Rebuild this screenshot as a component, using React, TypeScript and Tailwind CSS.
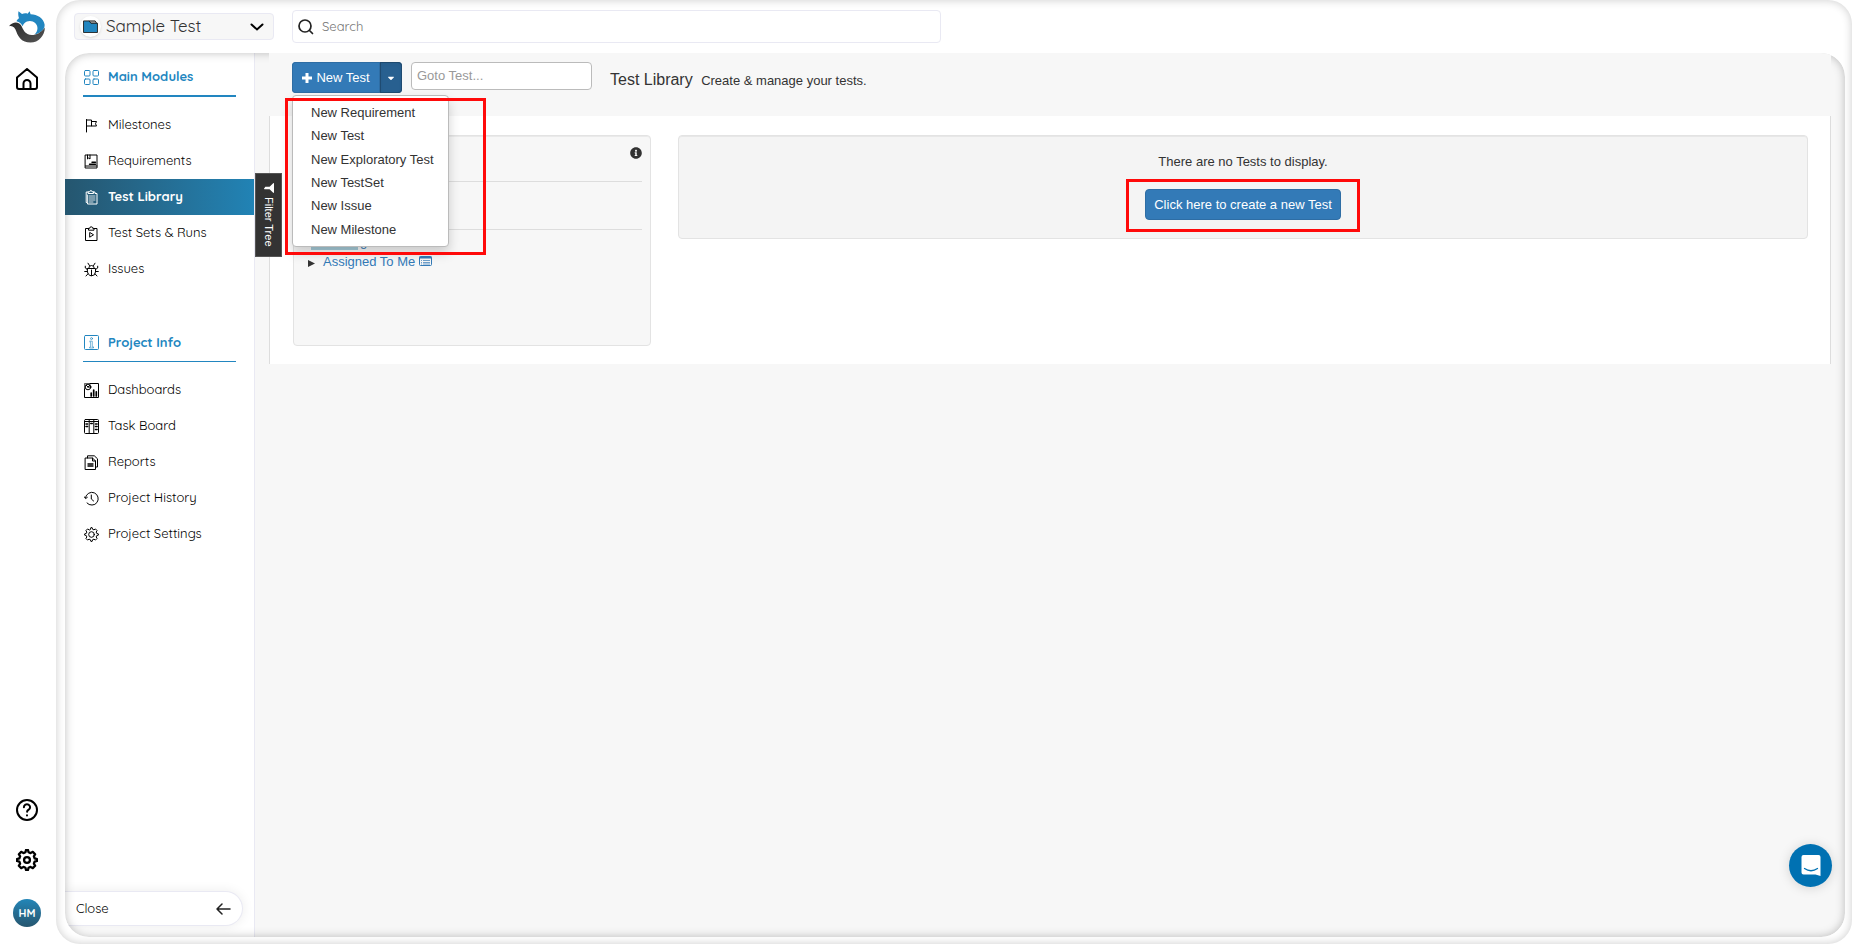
import { useState } from "react";
import { FaCaretDown, FaFilter, FaInfoCircle } from "react-icons/fa";

/* ─── Navigation ─── */
const MAIN_MODULES = [
  { label: "Milestones", icon: "flag" },
  { label: "Requirements", icon: "requirements" },
  { label: "Test Library", icon: "library" },
  { label: "Test Sets & Runs", icon: "runs" },
  { label: "Issues", icon: "bug" },
];

const PROJECT_INFO = [
  { label: "Dashboards", icon: "dashboard" },
  { label: "Task Board", icon: "board" },
  { label: "Reports", icon: "reports" },
  { label: "Project History", icon: "history" },
  { label: "Project Settings", icon: "gear" },
];

const NEW_ITEMS = [
  "New Requirement",
  "New Test",
  "New Exploratory Test",
  "New TestSet",
  "New Issue",
  "New Milestone",
];

const GEAR_PATH =
  "M10.3 3.6 11 1h2l.7 2.6 2.2.9 2.4-1.4 2.6 2.6-1.4 2.4.9 2.2L23 11v2l-2.6.7-.9 2.2 1.4 2.4-2.6 2.6-2.4-1.4-2.2.9L13 23h-2l-.7-2.6-2.2-.9-2.4 1.4-2.6-2.6 1.4-2.4-.9-2.2L1 13v-2l2.6-.7.9-2.2-1.4-2.4 2.6-2.6 2.4 1.4z";

function NavIcon({ name }: { name: string }) {
  return (
    <svg viewBox="0 0 15 15" className="size-[15px] shrink-0" fill="none" stroke="currentColor" strokeWidth="1" strokeLinecap="round" strokeLinejoin="round">
      {name === "modules" && (
        <>
          <rect x=".5" y=".5" width="5.5" height="5.5" rx="1" />
          <rect x="9" y=".5" width="5.5" height="5.5" rx="1" />
          <rect x=".5" y="9" width="5.5" height="5.5" rx="1" />
          <rect x="9" y="9" width="5.5" height="5.5" rx="1" />
        </>
      )}
      {name === "info" && (
        <>
          <rect x=".5" y=".5" width="14" height="14" rx="1" />
          <circle cx="7.5" cy="3.6" r="1" strokeWidth=".7" />
          <path d="M6 6.2h2.3v6H9.5M6 6.2v1.2h.6v4.8H5.500v.8h4v-.8" strokeWidth=".6" />
        </>
      )}
      {name === "flag" && (
        <path d="M2.500 14V1.500M2.500 2h5v6h-5M7.500 3.500h5l-1 2.200 1 2.300h-5" />
      )}
      {name === "requirements" && (
        <>
          <rect x="1.5" y="1" width="11.5" height="13" />
          <path d="M3.500 1v4l1.200-1L6 5V1M1.500 12h11.500" />
          <path d="M8 8.300h3.500M5.500 10.200h6" strokeWidth="1.4" />
        </>
      )}
      {name === "library" && (
        <>
          <path d="M4 2H2.200v10.500h1.300V14h9.500V3.500H11V2H9.500" />
          <path d="M4.500 1.800h1.200a1.200 1.200 0 0 1 2.400 0h1.400v1.700h-5z" />
          <path d="M5 6h6M5 8h6M5 10h6M5 12h4M3.500 5v7" strokeWidth=".8" />
        </>
      )}
      {name === "runs" && (
        <>
          <path d="M4.500 2.500h-3v12h11.500v-12h-3" />
          <path d="M4.500 3.800v-1.500h1.200a1.500 1.500 0 0 1 3 0H10v1.500zM5.700 6.800v4.400l3.500-2.200z" />
        </>
      )}
      {name === "bug" && (
        <>
          <path d="M3.500 6.500h8v3.300a4 4 0 0 1-8 0zM4.700 6.300a2.800 2.800 0 0 1 5.600 0M7.500 8v5.500M5.500 3.600 4 1.200M9.500 3.600 11 1.200" />
          <path d="M3.500 7.500 1.300 6V4.200M11.500 7.500 13.700 6V4.200M3.500 9.500H.7M11.500 9.500h2.800M4 11.800 2 14M11 11.800 13 14" />
        </>
      )}
      {name === "dashboard" && (
        <>
          <path d="M.5 6v8.500h14V.5H6" />
          <path d="M.5 6V.5H6" strokeWidth=".6" />
          <circle cx="4" cy="4" r="2.8" />
          <path d="M4 4 2 2M4 4h3M4 4l2-2" />
          <path d="M7.200 13V10M9.700 13V7M12.300 13V8.800" strokeWidth="1.7" />
        </>
      )}
      {name === "board" && (
        <>
          <rect x=".5" y=".5" width="14" height="14" rx="1" />
          <path d="M.5 2.500h14M5.200.5v14M9.800.5v14" />
          <path d="M2 5h1.600M2 7.500h1.600M6.800 4.500h1.400M11.500 5h1.600M11.500 7.500h1.600M11.500 10.500h1.600" strokeWidth="1.6" />
        </>
      )}
      {name === "reports" && (
        <>
          <path d="M1.500 3h7l3 3v8.500h-10z" />
          <path d="M3.500 3V.8h6.800l3.200 3V12h-2M8.500 3v3h3" />
          <path d="M4 9h5M4 11h5" strokeWidth="1.4" />
        </>
      )}
      {name === "history" && (
        <>
          <path d="M1.500 6.500A6.400 6.400 0 1 1 3 12" />
          <path d="M.3 5.800 1.500 7.600 3.300 6.400M7.300 4v4l2.300 2" />
        </>
      )}
      {name === "gear" && (
        <g transform="scale(.625)" strokeWidth="1.6">
          <path d={GEAR_PATH} />
          <circle cx="12" cy="12" r="4.5" />
        </g>
      )}
    </svg>
  );
}

function Logo() {
  return (
    <svg viewBox="0 0 36 32" className="h-8 w-9" aria-hidden="true">
      <defs>
        <linearGradient id="tail" x1="0" y1="0" x2="1" y2="1">
          <stop offset="0" stopColor="#2b2b2b" />
          <stop offset="1" stopColor="#555" />
        </linearGradient>
      </defs>
      <path
        fill="#2286c0"
        d="M9.500.2 13 2.900C15 2.200 17 2.200 18.600 2.700L20.600.3 21.600 3.300C28.500 3.300 34.500 7.500 35.600 13.500C36 17.500 33 21.500 25.500 23.600C29.200 20 29.400 15.200 26.400 12.200C23.300 9.200 18.300 9.300 15.400 12.200C14.600 13 14 14 13.700 15.200C12.300 12.500 10.500 11.300 7.500 10.300C8 9 9 8 10 7.300C9.200 5 9 2.500 9.500.2z"
      />
      <path
        fill="url(#tail)"
        d="M0 15.300C3.500 10.800 9.300 10.300 12 14.300C13.800 17 14.500 21 18.500 23C23.500 25.500 31 23.200 35.900 16.400C35.800 24.500 29.600 31.500 21.500 31.500C12.500 31.500 9.200 25.800 7.400 20.800C5.900 16.500 3.800 14.300 0 15.300z"
      />
    </svg>
  );
}

function NavSection({ title, icon, items, active, onSelect, thick }: {
  title: string;
  icon: string;
  items: { label: string; icon: string }[];
  active: string;
  onSelect: (label: string) => void;
  thick?: boolean;
}) {
  return (
    <section>
      <h2
        className={`mx-[18px] flex h-11 items-center gap-[9px] border-[#2286c0] pt-1.5 pl-px text-[13px] font-bold text-[#2286c0] ${
          thick ? "border-b-2" : "border-b"
        }`}
      >
        <NavIcon name={icon} />
        {title}
      </h2>
      <ul className="mt-2.5">
        {items.map((item) => (
          <li key={item.label}>
            <a
              href="#"
              onClick={() => onSelect(item.label)}
              className={`relative flex h-9 items-center gap-[9px] pl-[19px] text-[13px] ${
                active === item.label
                  ? "z-20 bg-linear-to-r from-[#25566f] to-[#2183b5] font-bold text-white"
                  : "text-black"
              }`}
            >
              <NavIcon name={item.icon} />
              {item.label}
            </a>
          </li>
        ))}
      </ul>
    </section>
  );
}

export default function App() {
  const [active, setActive] = useState("Test Library");
  const [menuOpen, setMenuOpen] = useState(true);

  return (
    <div className="flex h-screen bg-white font-['Quicksand','Lato',sans-serif] text-[#333]">
      {/* ── Icon rail ── */}
      <nav className="flex w-14 shrink-0 flex-col items-center pt-[11px] pr-[2px] pb-[17px]">
        <a href="#" aria-label="Home page">
          <Logo />
        </a>
        <a href="#" aria-label="Home" className="mt-[25px] text-black">
          <svg viewBox="0 0 22 22" className="size-[22px]" fill="none" stroke="currentColor" strokeWidth="2" strokeLinejoin="round">
            <path d="M1 9.500 11 1l10 8.500V19a2 2 0 0 1-2 2H3a2 2 0 0 1-2-2zM7.500 21v-5.500a3.500 3.500 0 0 1 7 0V21" />
          </svg>
        </a>
        <div className="mt-auto flex flex-col items-center gap-7 text-black">
          <button aria-label="Help">
            <svg viewBox="0 0 22 22" className="block size-[22px]" fill="none" stroke="currentColor" strokeWidth="2" strokeLinecap="round">
              <circle cx="11" cy="11" r="10" />
              <path d="M7.900 8.200a3.100 3 0 1 1 4.800 2.500c-1 .6-1.600 1-1.600 2.100M11 16.300v.1" />
            </svg>
          </button>
          <button aria-label="Settings">
            <svg viewBox="0 0 24 24" className="block size-[22px]" fill="none" stroke="currentColor" strokeWidth="2.5" strokeLinejoin="round">
              <path d={GEAR_PATH} />
              <circle cx="12" cy="12" r="3.2" />
            </svg>
          </button>
          <button className="size-7 rounded-full bg-linear-to-b from-[#2286b8] to-[#25566f] text-[11px] font-bold text-white">
            HM
          </button>
        </div>
      </nav>

      {/* ── Shell ── */}
      <div className="flex min-w-0 flex-1 flex-col rounded-3xl pr-[7px] pb-[7px] pl-[9px] shadow-[inset_0_0_10px_rgba(0,0,0,0.2)]">
        <header className="flex h-[53px] shrink-0 items-center pl-[9px]">
          <button className="flex h-[27px] w-[200px] items-center rounded border border-[#e9e9f3] bg-[#f7f7f7] pr-[9px] pl-[5px]">
            <span className="flex size-[21px] items-center justify-center rounded-full bg-white shadow">
              <svg viewBox="0 0 16 14" className="h-[13px] w-[15px]" stroke="#222" strokeWidth="1" strokeLinejoin="round">
                <path d="M6.500 1H13l2 3H8z" fill="#aaa" />
                <path d="M.5 1h6l2 2.500h7V13.500H.5z" fill="#2286c0" />
              </svg>
            </span>
            <span className="ml-[5px] pb-0.5 text-[17px] leading-6">Sample Test</span>
            <svg viewBox="0 0 14 8" className="ml-auto h-2 w-3.5" fill="none" stroke="#000" strokeWidth="2" strokeLinecap="round">
              <path d="m1.500 1.500 5.500 5 5.500-5" />
            </svg>
          </button>
          <label className="ml-[18px] flex h-[33px] w-[649px] items-center gap-2 rounded border border-[#e9e9f3] bg-white px-[5px]">
            <svg viewBox="0 0 16 16" className="size-4" fill="none" stroke="#222" strokeWidth="1.7" strokeLinecap="round">
              <circle cx="7" cy="7" r="6" />
              <path d="m11.500 11.500 3 3" />
            </svg>
            <input aria-label="Search" placeholder="Search" className="flex-1 text-[13px] outline-none placeholder:text-[#757575]" />
          </label>
        </header>

        <div className="relative flex min-h-0 flex-1 overflow-hidden rounded-3xl bg-[#f7f7f7]">
          <div className="pointer-events-none absolute inset-0 z-10 rounded-3xl shadow-[inset_0_0_10px_rgba(0,0,0,0.25)]" />

          {/* ── Sidebar ── */}
          <aside className="flex w-[190px] shrink-0 flex-col gap-[31px] border-r border-[#e9e9f3] bg-white pb-[11px]">
            <NavSection title="Main Modules" icon="modules" items={MAIN_MODULES} active={active} onSelect={setActive} thick />
            <NavSection title="Project Info" icon="info" items={PROJECT_INFO} active={active} onSelect={setActive} />
            <button className="mt-auto mr-[11px] flex h-[35px] items-center justify-between rounded-r-full border border-l-0 border-[#e9e9f3] bg-white pr-[11px] pl-[11px] text-[13px] text-black shadow-[0_0_12px_rgba(0,0,0,0.08)]">
              Close
              <svg viewBox="0 0 15 12" className="h-3 w-[15px]" fill="none" stroke="#222" strokeWidth="1.5" strokeLinecap="round" strokeLinejoin="round">
                <path d="M14 6H1M6 1 1 6l5 5" />
              </svg>
            </button>
          </aside>

          {/* ── Content ── */}
          <main className="relative min-w-0 flex-1 px-3.5 font-['Liberation_Sans',sans-serif] text-[13px]">
            <button className="absolute top-[120px] left-0 z-20 flex h-[84px] w-[27px] items-center justify-center gap-1 border border-[#555] bg-[#333] text-[11px] text-white [writing-mode:vertical-rl]">
              <FaFilter className="size-2.5 rotate-90" />
              Filter Tree
            </button>

            <div className="relative z-20 flex h-[63px] items-start bg-[#f7f7f7] pt-[9px] pl-[23px]">
              <div className="relative flex">
                <button className="flex h-[31px] w-[88px] items-center justify-center gap-1 rounded-l bg-[#337ab7] text-white inset-ring inset-ring-[#2e6da4]">
                  <svg viewBox="0 0 10 10" className="size-2.5" stroke="currentColor" strokeWidth="3">
                    <path d="M5 0v10M0 5h10" />
                  </svg>
                  New Test
                </button>
                <button
                  aria-label="More new items"
                  onClick={() => setMenuOpen(!menuOpen)}
                  className="flex h-[31px] w-[22px] items-center justify-center rounded-r bg-[#286090] text-white inset-shadow-sm inset-ring inset-ring-[#204d74]"
                >
                  <FaCaretDown className="size-2.5" />
                </button>
                {menuOpen && (
                  <ul className="absolute top-[33px] left-0 z-30 flex h-[152px] w-[157px] flex-col rounded border border-[#bbb] bg-white py-[5px] shadow-[0_6px_12px_rgba(0,0,0,0.18)]">
                    {NEW_ITEMS.map((item) => (
                      <li key={item} className="flex flex-1">
                        <a href="#" className="flex flex-1 items-center pl-[18px] whitespace-nowrap">{item}</a>
                      </li>
                    ))}
                  </ul>
                )}
                {/* Callout round the menu */}
                <div className="pointer-events-none absolute top-[36px] -left-[7px] z-40 h-[157px] w-[201px] border-[3px] border-[#ff0a0a]" />
              </div>
              <input
                aria-label="Goto Test"
                placeholder="Goto Test..."
                className="ml-[9px] h-7 w-[181px] rounded border border-[#bbb] bg-white px-[5px] pb-0.5 text-[13px] outline-none placeholder:text-[#999]"
              />
              <h1 className="ml-[18px] pt-1.5 text-base leading-6">
                Test Library <small className="ml-1 text-[13px]">Create &amp; manage your tests.</small>
              </h1>
            </div>

            <div className="flex items-start gap-[27px] border-x border-[#ddd] bg-white pt-[19px] pr-[22px] pb-[18px] pl-[23px]">
              <div className="h-[211px] w-[358px] shrink-0 rounded border border-[#e3e3e3] bg-[#f7f7f7] px-2 inset-shadow-2xs">
                <div className="flex h-[46px] justify-end border-b border-[#ddd] pt-[11px]">
                  <FaInfoCircle className="size-3" />
                </div>
                <div className="h-12 border-b border-[#ddd]" />
                <div className="flex h-5 items-end gap-0.5 pl-[9px] leading-4 text-[#337ab7]">
                  <span className="h-4 w-[47px] bg-[#a6cbd8]" />
                  g
                </div>
                <div className="flex h-6 items-center pl-1.5 text-[#337ab7]">
                  <svg viewBox="0 0 7 7" className="mt-0.5 mr-2 size-[7px]">
                    <path d="M0 0v7l7-3.500z" fill="#333" />
                  </svg>
                  <a href="#">Assigned To Me</a>
                  <svg viewBox="0 0 13 10" className="mb-0.5 ml-1 h-2.5 w-[13px]" fill="none" stroke="currentColor">
                    <rect x=".5" y=".5" width="12" height="9" rx="1" />
                    <path d="M.5 1.500h12" strokeWidth="2" />
                    <path d="M2 4.500h1M4 4.500h7M2 6.500h1M4 6.500h7M2 8h1M4 8h7" strokeWidth=".7" />
                  </svg>
                </div>
              </div>

              <div className="flex h-[104px] flex-1 flex-col items-center rounded border border-[#e3e3e3] bg-[#f4f4f4] pt-4 inset-shadow-2xs">
                <p className="leading-5">There are no Tests to display.</p>
                <div className="mt-[7px] border-[3px] border-[#ff0a0a] px-4 pt-[7px] pb-[9px]">
                  <button className="block h-[31px] w-[196px] rounded border border-[#2e6da4] bg-[#337ab7] text-white">
                    Click here to create a new Test
                  </button>
                </div>
              </div>
            </div>
          </main>
        </div>
      </div>

      {/* ── Chat launcher ── */}
      <button aria-label="Open chat" className="fixed right-5 bottom-[57px] z-50 flex size-[43px] items-center justify-center rounded-full bg-[#0071b2] shadow-[0_1px_12px_rgba(0,0,0,0.15)]">
        <svg viewBox="0 0 20 21" className="h-[21px] w-5">
          <path d="M2.500 0h15A2 2 0 0 1 19.500 2v19l-5-1.500h-12A2 2 0 0 1 .5 17.500V2a2 2 0 0 1 2-2z" fill="#fff" />
          <path d="M3.500 13.500q6.500 4.500 13 0" fill="none" stroke="#0071b2" strokeWidth="1.3" strokeLinecap="round" />
        </svg>
      </button>
    </div>
  );
}
